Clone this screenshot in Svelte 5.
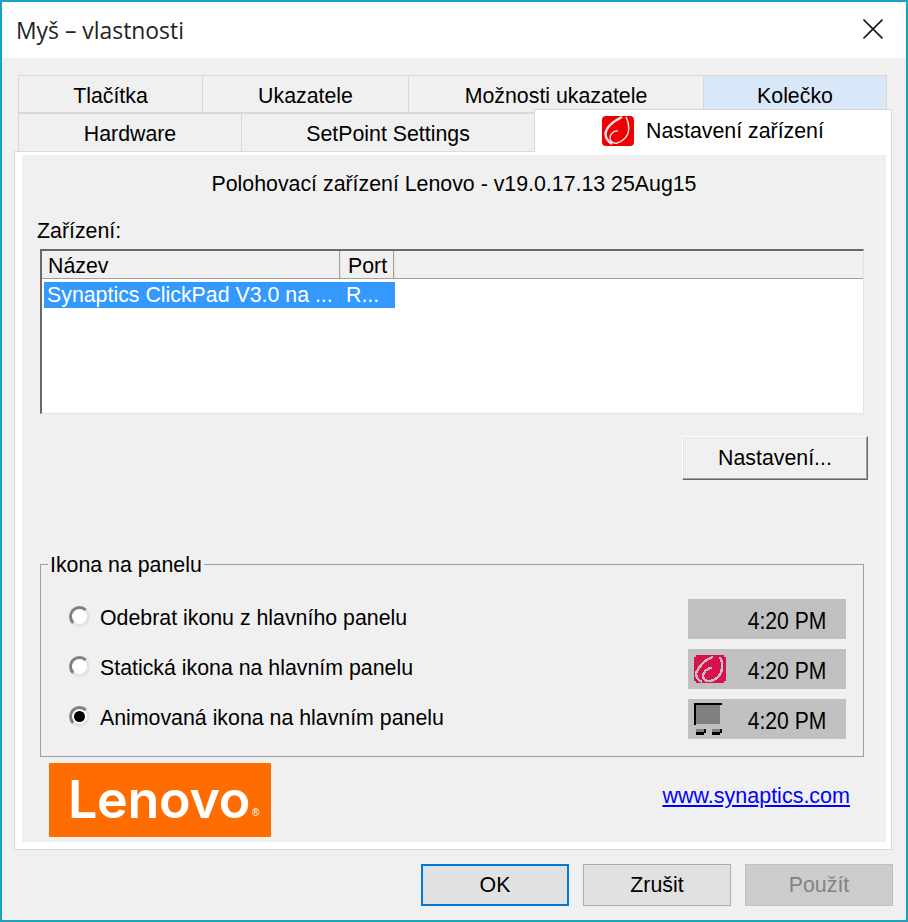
<script lang="ts">
    const tabsTop = [
        { label: 'Tlačítka', width: 184 },
        { label: 'Ukazatele', width: 206 },
        { label: 'Možnosti ukazatele', width: 295 },
        { label: 'Kolečko', width: 184, hot: true }
    ];
    const tabsBottom = [
        { label: 'Hardware', width: 223 },
        { label: 'SetPoint Settings', width: 293 }
    ];
    const trayOptions = [
        { label: 'Odebrat ikonu z hlavního panelu', icon: 'none', checked: false },
        { label: 'Statická ikona na hlavním panelu', icon: 'static', checked: false },
        { label: 'Animovaná ikona na hlavním panelu', icon: 'anim', checked: true }
    ];
</script>

<div class="window">
    <header class="titlebar">
        <span class="title">Myš – vlastnosti</span>
        <svg class="close" width="20" height="20" viewBox="0 0 20 20">
            <path d="M0.500 0.500 L19.500 19.500 M19.500 0.500 L0.500 19.500" stroke="#1a1a1a" stroke-width="1.600" fill="none" />
        </svg>
    </header>

    <div class="body">
        <div class="tabs">
            <div class="tab-row top">
                {#each tabsTop as tab}
                    <div class="tab" class:hot={tab.hot} style="width: {tab.width}px">{tab.label}</div>
                {/each}
            </div>
            <div class="tab-row bottom">
                {#each tabsBottom as tab}
                    <div class="tab" style="width: {tab.width}px">{tab.label}</div>
                {/each}
                <div class="tab active">
                    <svg class="tab-icon" width="32" height="30" viewBox="0 0 32 30">
                        <rect width="32" height="30" rx="4" fill="#ee0000" />
                        <path d="M20 1 C12 5 4 11 3.500 18 C3.500 23 7 26 10 28" stroke="#f2e6e6" stroke-width="2.400" fill="none" />
                        <path d="M24 1 C28 9 28 18 22 23 C18 27 12 29 9 25 C6 20 11 14 16 15" stroke="#f2e6e6" stroke-width="1.400" fill="none" />
                    </svg>
                    <span>Nastavení zařízení</span>
                </div>
            </div>
        </div>

        <div class="panel">
            <div class="page">
                <div class="heading">Polohovací zařízení Lenovo - v19.0.17.13 25Aug15</div>
                <div class="devices-label">Zařízení:</div>

                <div class="listview">
                    <div class="list-head">
                        <div class="col name">Název</div>
                        <div class="col port">Port</div>
                    </div>
                    <div class="list-row">
                        <span class="cell-name">Synaptics ClickPad V3.0 na ...</span>
                        <span class="cell-port">R...</span>
                    </div>
                </div>

                <div class="settings-row">
                    <button class="settings">Nastavení...</button>
                </div>

                <fieldset class="group">
                    <legend>Ikona na panelu</legend>
                    {#each trayOptions as opt}
                        <div class="option">
                            <span class="radio" class:checked={opt.checked}></span>
                            <span class="option-label">{opt.label}</span>
                            <div class="tray">
                                {#if opt.icon === 'static'}
                                    <svg class="tray-icon" width="32" height="28" viewBox="0 0 32 28" shape-rendering="crispEdges">
                                        <rect x="2" y="0" width="28" height="28" fill="#d8104c" />
                                        <rect x="0" y="2" width="32" height="24" fill="#d8104c" />
                                        <path d="M19 2 C12 4 6 10 2 18 C2 22 4 25 8 27" stroke="#c0c0c0" stroke-width="2.400" fill="none" />
                                        <path d="M26 2 C30 10 28 18 24 22 C20 26 12 29 9 22 C9 17 13 13 18 13" stroke="#c0c0c0" stroke-width="2.400" fill="none" />
                                    </svg>
                                {:else if opt.icon === 'anim'}
                                    <svg class="tray-icon anim" width="28" height="32" viewBox="0 0 28 32" shape-rendering="crispEdges">
                                        <rect x="2" y="2" width="24" height="19" fill="#808080" />
                                        <path d="M0 0 H28 V2 H2 V22 H0 Z" fill="#000" />
                                        <path d="M2 26 H10 V29 H2 Z M18 26 H26 V29 H18 Z" fill="#808080" />
                                        <path d="M2 29 H10 V26 H12 V30 H10 V32 H2 Z M18 29 H26 V26 H28 V30 H26 V32 H18 Z" fill="#000" />
                                    </svg>
                                {/if}
                                <span class="clock">4:20 PM</span>
                            </div>
                        </div>
                    {/each}
                </fieldset>

                <div class="brand-row">
                    <div class="lenovo">
                        <span class="wordmark">Lenovo</span><span class="reg">®</span>
                    </div>
                    <a class="site" href="#synaptics">www.synaptics.com</a>
                </div>
            </div>
        </div>

        <div class="actions">
            <button class="btn default">OK</button>
            <button class="btn">Zrušit</button>
            <button class="btn disabled">Použít</button>
        </div>
    </div>
</div>

<style>
    :global(body) {
        margin: 0;
        background: #f0f0f0;
    }

    .window {
        width: 908px;
        height: 922px;
        box-sizing: border-box;
        border: 2px solid #18a3c0;
        display: flex;
        flex-direction: column;
        font-family: "Liberation Sans", Arial, sans-serif;
        font-size: 21.33px;
        color: #000;
        overflow: hidden;
    }

    .titlebar {
        height: 56px;
        flex: none;
        background: #fff;
        display: flex;
        align-items: center;
        justify-content: space-between;
        padding: 0 23px 0 14px;
    }

    .title {
        font-family: "Open Sans", "Noto Sans", sans-serif;
        font-size: 22.900px;
        color: #222;
        margin-top: 1px;
    }

    .close {
        margin-top: -2px;
    }

    .body {
        flex: 1;
        background: #f0f0f0;
        position: relative;
    }

    .tabs {
        padding: 17px 0 0 16px;
    }

    .tab-row {
        display: flex;
    }

    .tab-row.top {
        height: 38px;
    }

    .tab-row.bottom {
        height: 38px;
        position: relative;
        z-index: 1;
    }

    .tab {
        box-sizing: border-box;
        border: 1px solid #d9d9d9;
        border-right-width: 0;
        text-align: center;
        line-height: 40px;
        background: #f0f0f0;
    }

    .tab-row.top .tab:last-child {
        border-right-width: 1px;
    }

    .tab.hot {
        background: #d8e8f8;
    }

    .tab-row.bottom .tab {
        border-top-width: 1px;
        height: 39px;
    }

    .tab.active {
        width: 358px;
        height: 43px !important;
        margin-top: -4px;
        background: #fff;
        border-right-width: 1px;
        border-bottom: 0;
        display: flex;
        align-items: center;
        justify-content: center;
        gap: 12px;
    }

    .tab-icon {
        flex: none;
    }

    .panel {
        box-sizing: border-box;
        margin: 0 0 0 12px;
        width: 878px;
        height: 699px;
        border: 1px solid #d9d9d9;
        background: #fff;
        padding: 3px 5px 7px 7px;
    }

    .page {
        height: 100%;
        background: #f0f0f0;
        box-sizing: border-box;
        padding: 18px 22px 0 15px;
        display: flex;
        flex-direction: column;
    }

    .heading {
        text-align: center;
        height: 23px;
        line-height: 23px;
        padding-left: 7px;
    }

    .devices-label {
        margin-top: 24px;
        height: 23px;
        line-height: 23px;
    }

    .listview {
        box-sizing: border-box;
        margin: 6px 0 0 3px;
        width: 824px;
        height: 165px;
        background: #fff;
        border: 1px solid #a0a0a0;
        border-top: 2px solid #696969;
        border-left: 2px solid #696969;
        border-bottom-color: #e3e3e3;
        border-right-color: #e3e3e3;
    }

    .list-head {
        height: 27px;
        display: flex;
        background: #f0f0f0;
        border-bottom: 1px solid #a0a0a0;
        line-height: 30px;
    }

    .col {
        box-sizing: border-box;
        border-right: 1px solid #a0a0a0;
        box-shadow: 1px 0 0 #e3e3e3;
        padding-left: 6px;
    }

    .col.name {
        width: 298px;
    }

    .col.port {
        width: 54px;
        padding-left: 8px;
    }

    .list-row {
        margin: 3px 0 0 2px;
        width: 351px;
        height: 26px;
        background: #3399ff;
        color: #fff;
        display: flex;
        line-height: 26px;
    }

    .cell-name {
        width: 299px;
        padding-left: 3px;
    }

    .settings-row {
        display: flex;
        justify-content: flex-end;
        margin-top: 22px;
    }

    .settings {
        box-sizing: border-box;
        width: 186px;
        height: 44px;
        margin-right: -4px;
        font: inherit;
        color: #000;
        background: #f0f0f0;
        border: 1px solid;
        border-color: #fff #696969 #696969 #fff;
        box-shadow: inset -1px -1px 0 #a0a0a0, inset 1px 1px 0 #e3e3e3;
        padding: 0;
    }

    .group {
        box-sizing: border-box;
        margin: 73px 0 0 3px;
        width: 824px;
        height: 204px;
        border: 1px solid #a0a0a0;
        padding: 23px 17px 0 0;
        min-inline-size: 0;
    }

    legend {
        padding: 2px 2px 0;
        margin-left: 7px;
        line-height: 21px;
    }

    .option {
        height: 40px;
        margin-bottom: 10px;
        padding-left: 28px;
        display: flex;
        align-items: center;
    }

    .radio {
        box-sizing: border-box;
        position: relative;
        width: 21px;
        height: 21px;
        border-radius: 50%;
        background: #fff;
        border: 3px solid;
        border-color: #808080 #e3e3e3 #e3e3e3 #808080;
        margin-top: -5px;
    }

    .radio.checked::after {
        content: "";
        position: absolute;
        left: 2px;
        top: 2px;
        width: 11px;
        height: 11px;
        border-radius: 50%;
        background: #000;
    }

    .option-label {
        margin-left: 10px;
        margin-top: -2px;
        flex: 1;
    }

    .tray {
        position: relative;
        width: 158px;
        height: 40px;
        background: #c0c0c0;
    }

    .tray-icon {
        position: absolute;
        left: 6px;
        top: 6px;
    }

    .tray-icon.anim {
        top: 4px;
    }

    .clock {
        position: absolute;
        right: 20px;
        top: 8px;
        font-size: 24px;
        line-height: 28px;
        white-space: nowrap;
        transform: scaleX(0.88);
        transform-origin: right center;
    }

    .brand-row {
        display: flex;
        justify-content: space-between;
        align-items: flex-start;
        margin-top: 6px;
        padding-left: 12px;
    }

    .lenovo {
        box-sizing: border-box;
        width: 222px;
        height: 74px;
        background: #ff6d00;
        color: #fff;
        display: flex;
        align-items: center;
        padding-left: 19px;
        position: relative;
    }

    .wordmark {
        font-family: Inter, "Liberation Sans", sans-serif;
        font-weight: 600;
        font-size: 52px;
        letter-spacing: -0.300px;
        line-height: 74px;
    }

    .reg {
        font-size: 10px;
        position: absolute;
        left: 203px;
        top: 44px;
    }

    .site {
        color: #0000ff;
        text-decoration: underline;
        font-size: 21.500px;
        margin: 22px 14px 0 0;
        line-height: 23px;
    }

    .actions {
        display: flex;
        justify-content: flex-end;
        gap: 14px;
        padding: 14px 13px 0 0;
    }

    .btn {
        box-sizing: border-box;
        width: 148px;
        height: 42px;
        font: inherit;
        color: #000;
        background: #e1e1e1;
        border: 1px solid #adadad;
        padding: 0;
    }

    .btn.disabled {
        background: #cccccc;
        border-color: #bfbfbf;
        color: #838383;
    }

    .btn.default {
        border: 2px solid #0078d7;
    }
</style>
